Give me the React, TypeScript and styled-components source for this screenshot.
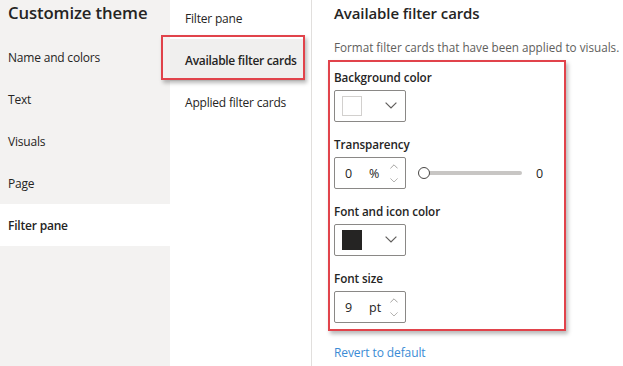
import React from "react";
import styled, { createGlobalStyle } from "styled-components";

const Global = createGlobalStyle`
  html, body { margin: 0; padding: 0; background: #ffffff; }
  body { font-family: "Open Sans", "Noto Sans", "Liberation Sans", sans-serif; color: #252423; }
  * { box-sizing: border-box; }
`;

const Page = styled.div`
  display: flex;
  width: 623px;
  height: 366px;
  overflow: hidden;
  background: #ffffff;
`;

const LeftPanel = styled.div`
  width: 170px;
  flex: none;
  background: #f3f2f1;
  display: flex;
  flex-direction: column;
`;

const Title = styled.div`
  height: 36px;
  padding: 1px 0 0 8px;
  font-size: 16.7px;
  font-weight: 600;
  line-height: 24px;
  letter-spacing: -0.1px;
  color: #252423;
`;

const NavItem = styled.div<{ $active?: boolean }>`
  height: 42px;
  display: flex;
  align-items: center;
  padding-left: 8px;
  font-size: 12px;
  letter-spacing: -0.2px;
  font-weight: ${(p) => (p.$active ? 600 : 400)};
  background: ${(p) => (p.$active ? "#ffffff" : "transparent")};
  color: #252423;
`;

const MiddlePanel = styled.div`
  width: 142px;
  flex: none;
  background: #ffffff;
  border-right: 1px solid #e1dfdd;
  display: flex;
  flex-direction: column;
  margin-top: -3px;
`;

const SubItem = styled.div<{ $active?: boolean }>`
  position: relative;
  height: 42px;
  display: flex;
  align-items: center;
  padding-left: 15px;
  margin-right: ${(p) => (p.$active ? "6px" : "0")};
  font-size: 12px;
  letter-spacing: ${(p) => (p.$active ? "-0.3px" : "-0.2px")};
  white-space: nowrap;
  font-weight: ${(p) => (p.$active ? 600 : 400)};
  background: ${(p) => (p.$active ? "#f0efee" : "transparent")};
  color: #252423;
`;

const Highlight = styled.span`
  position: absolute;
  top: -4px;
  bottom: 1px;
  left: -9px;
  right: 0px;
  border: 2.5px solid #e1434b;
  box-shadow: 2px 3px 4px rgba(0, 0, 0, 0.28);
  pointer-events: none;
`;

const RightPanel = styled.div`
  flex: 1;
  padding: 2px 0 0 22px;
  display: flex;
  flex-direction: column;
`;

const Heading = styled.div`
  font-size: 15px;
  font-weight: 600;
  line-height: 22px;
  letter-spacing: -0.1px;
  color: #252423;
`;

const Description = styled.div`
  margin-top: 14px;
  font-size: 11.7px;
  line-height: 18px;
  color: #605e5c;
  white-space: nowrap;
`;

const AnnotatedGroup = styled.div`
  margin: 4px 0 0 -6px;
  width: 238px;
  border: 2.5px solid #e1434b;
  box-shadow: 2px 3px 4px rgba(0, 0, 0, 0.28);
  padding: 5px 0 6px 4px;
  display: flex;
  flex-direction: column;
  gap: 12px;
`;

const Field = styled.div`
  display: flex;
  flex-direction: column;
  gap: 3px;
`;

const Label = styled.div`
  font-size: 11.7px;
  font-weight: 600;
  line-height: 20px;
  letter-spacing: -0.1px;
  color: #252423;
`;

const Row = styled.div`
  display: flex;
  align-items: center;
`;

const Box = styled.div`
  width: 72px;
  height: 32px;
  border: 1px solid #8a8886;
  border-radius: 2px;
  display: flex;
  align-items: center;
  background: #ffffff;
`;

const Swatch = styled.div<{ $color: string }>`
  width: 20px;
  height: 20px;
  margin-left: 7px;
  background: ${(p) => p.$color};
  border: 1px solid ${(p) => (p.$color === "#ffffff" ? "#d2d0ce" : p.$color)};
`;

const Chevron = styled.div`
  margin-left: auto;
  margin-right: 8px;
  display: flex;
  align-items: center;
`;

const Value = styled.span`
  margin-left: 10px;
  width: 24px;
  font-size: 12.5px;
  color: #252423;
`;

const Unit = styled.span`
  font-size: 12.5px;
  color: #252423;
`;

const Spinner = styled.div`
  margin-left: auto;
  margin-right: 7px;
  display: flex;
  flex-direction: column;
  gap: 9px;
`;

const Slider = styled.div`
  margin-left: 12px;
  width: 106px;
  height: 12px;
  position: relative;
  display: flex;
  align-items: center;
`;

const Track = styled.div`
  margin-left: 4px;
  width: 100px;
  height: 4px;
  border-radius: 2px;
  background: #c8c6c4;
`;

const Thumb = styled.div`
  position: absolute;
  left: 0;
  top: 0;
  width: 12px;
  height: 12px;
  border-radius: 50%;
  background: #ffffff;
  border: 1.5px solid #484644;
`;

const SliderValue = styled.span`
  margin-left: 12px;
  font-size: 12.5px;
  color: #252423;
`;

const Link = styled.a`
  margin-top: 13px;
  font-size: 12px;
  line-height: 18px;
  letter-spacing: -0.1px;
  color: #3a8bd5;
  text-decoration: none;
`;

const ChevronDown = ({ size = 12, color = "#605e5c" }: { size?: number; color?: string }) => (
  <svg width={size} height={size * 0.6} viewBox="0 0 10 6" fill="none">
    <path d="M0.5 0.5 L5 5 L9.5 0.5" stroke={color} strokeWidth="1" />
  </svg>
);

const ChevronUp = ({ size = 8, color = "#a19f9d" }: { size?: number; color?: string }) => (
  <svg width={size} height={size * 0.6} viewBox="0 0 10 6" fill="none">
    <path d="M0.5 5.5 L5 1 L9.5 5.5" stroke={color} strokeWidth="1.2" />
  </svg>
);

const Stepper = () => (
  <Spinner>
    <ChevronUp />
    <ChevronDown size={8} color="#a19f9d" />
  </Spinner>
);

export default function App() {
  return (
    <>
      <Global />
      <Page>
        <LeftPanel>
          <Title>Customize theme</Title>
          <NavItem>Name and colors</NavItem>
          <NavItem>Text</NavItem>
          <NavItem>Visuals</NavItem>
          <NavItem>Page</NavItem>
          <NavItem $active>Filter pane</NavItem>
        </LeftPanel>
        <MiddlePanel>
          <SubItem>Filter pane</SubItem>
          <SubItem $active>
            Available filter cards
            <Highlight />
          </SubItem>
          <SubItem>Applied filter cards</SubItem>
        </MiddlePanel>
        <RightPanel>
          <Heading>Available filter cards</Heading>
          <Description>Format filter cards that have been applied to visuals.</Description>
          <AnnotatedGroup>
            <Field>
              <Label>Background color</Label>
              <Box>
                <Swatch $color="#ffffff" />
                <Chevron>
                  <ChevronDown />
                </Chevron>
              </Box>
            </Field>
            <Field>
              <Label>Transparency</Label>
              <Row>
                <Box>
                  <Value>0</Value>
                  <Unit>%</Unit>
                  <Stepper />
                </Box>
                <Slider>
                  <Track />
                  <Thumb />
                </Slider>
                <SliderValue>0</SliderValue>
              </Row>
            </Field>
            <Field>
              <Label>Font and icon color</Label>
              <Box>
                <Swatch $color="#252423" />
                <Chevron>
                  <ChevronDown />
                </Chevron>
              </Box>
            </Field>
            <Field>
              <Label>Font size</Label>
              <Box>
                <Value>9</Value>
                <Unit>pt</Unit>
                <Stepper />
              </Box>
            </Field>
          </AnnotatedGroup>
          <Link href="#">Revert to default</Link>
        </RightPanel>
      </Page>
    </>
  );
}
